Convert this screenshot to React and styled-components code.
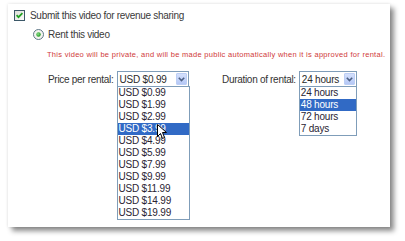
import React from "react";
import styled, { createGlobalStyle } from "styled-components";

const GlobalStyle = createGlobalStyle`
  html, body {
    margin: 0;
    padding: 0;
    background: #ffffff;
  }
  body {
    font-family: "Liberation Sans", Arial, sans-serif;
  }
`;

const Stage = styled.div`
  width: 405px;
  height: 241px;
  padding: 4px 0 0 8px;
  box-sizing: border-box;
  overflow: hidden;
`;

const Panel = styled.div`
  width: 382px;
  height: 223px;
  background: #ffffff;
  box-sizing: border-box;
  padding: 6px 0 0 6px;
  box-shadow: 4px 4px 5px rgba(0, 0, 0, 0.45), 0 0 3px rgba(0, 0, 0, 0.12);
`;

const Row = styled.div`
  display: flex;
  align-items: center;
  height: ${(props) => props.h || 11}px;
  margin-top: ${(props) => props.mt || 0}px;
  margin-left: ${(props) => props.ml || 0}px;
  gap: ${(props) => props.gap || 0}px;
`;

const Text = styled.span`
  font-size: 10px;
  letter-spacing: -0.3px;
  color: #3a3a3a;
  white-space: nowrap;
  line-height: 11px;
`;

const Notice = styled.div`
  margin: 10px 0 0 33px;
  font-size: 7.5px;
  letter-spacing: 0.29px;
  line-height: 10px;
  color: #d03a3a;
  white-space: nowrap;
`;

const Field = styled.div`
  display: flex;
  align-items: center;
  gap: 3px;
  width: ${(props) => (props.w ? `${props.w}px` : "auto")};
`;

const Label = styled.span`
  font-size: 10px;
  letter-spacing: -0.3px;
  color: #333333;
  white-space: nowrap;
`;

const Select = styled.div`
  position: relative;
  width: ${(props) => props.w}px;
  height: 16px;
  box-sizing: border-box;
  border: 1px solid #7f9db9;
  background: #ffffff;
  display: flex;
  align-items: center;
`;

const SelectValue = styled.span`
  flex: 1;
  padding-left: 2px;
  font-size: 10px;
  letter-spacing: -0.2px;
  color: #2a2a2a;
  white-space: nowrap;
`;

const ArrowButton = styled.span`
  width: 11px;
  height: 12px;
  margin-right: 1px;
  box-sizing: border-box;
  border: 1px solid #bccef5;
  border-radius: 1px;
  background: linear-gradient(#d4e0fc, #b5c8f6);
  display: flex;
  align-items: center;
  justify-content: center;
`;

const List = styled.div`
  position: absolute;
  top: 100%;
  left: -1px;
  width: ${(props) => props.w}px;
  box-sizing: border-box;
  border: 1px solid #7f9db9;
  background: #ffffff;
  z-index: 2;
`;

const Option = styled.div`
  height: 12px;
  line-height: 12px;
  padding-left: 1px;
  font-size: 10px;
  letter-spacing: -0.2px;
  white-space: nowrap;
  color: ${(props) => (props.selected ? "#ffffff" : "#2a2433")};
  background: ${(props) => (props.selected ? "#316ac5" : "transparent")};
`;

const Pointer = styled.svg`
  position: absolute;
  left: 39px;
  top: 37px;
`;

const Checkbox = () => (
  <svg width="11" height="11" viewBox="0 0 11 11">
    <defs>
      <linearGradient id="cbg" x1="0" y1="0" x2="1" y2="1">
        <stop offset="0" stopColor="#dcdcd6" />
        <stop offset="1" stopColor="#ffffff" />
      </linearGradient>
    </defs>
    <rect x="0.5" y="0.5" width="10" height="10" fill="url(#cbg)" stroke="#3c5868" />
    <path d="M2.6 5.2 L4.5 7.2 L8.4 3.2" fill="none" stroke="#21a121" strokeWidth="1.7" />
  </svg>
);

const Radio = () => (
  <svg width="11" height="11" viewBox="0 0 11 11">
    <defs>
      <radialGradient id="rdot" cx="0.4" cy="0.4" r="0.6">
        <stop offset="0" stopColor="#8ee08e" />
        <stop offset="1" stopColor="#1f9a1f" />
      </radialGradient>
    </defs>
    <circle cx="5.5" cy="5.5" r="5" fill="#f4f4f0" stroke="#5f7888" />
    <circle cx="5.5" cy="5.5" r="2.2" fill="url(#rdot)" />
  </svg>
);

const Chevron = () => (
  <svg width="7" height="5" viewBox="0 0 7 5">
    <path d="M0.8 0.8 L3.5 3.6 L6.2 0.8" fill="none" stroke="#4d6185" strokeWidth="1.6" />
  </svg>
);

const prices = ["0.99", "1.99", "2.99", "3.99", "4.99", "5.99", "7.99", "9.99", "11.99", "14.99", "19.99"];
const durations = ["24 hours", "48 hours", "72 hours", "7 days"];

const App = () => {
  return (
    <>
      <GlobalStyle />
      <Stage>
        <Panel>
          <Row gap={5}>
            <Checkbox />
            <Text>Submit this video for revenue sharing</Text>
          </Row>
          <Row mt={8} ml={19} gap={4}>
            <Radio />
            <Text>Rent this video</Text>
          </Row>
          <Notice>
            This video will be private, and will be made public automatically when it is approved for rental.
          </Notice>
          <Row h={16} mt={11} ml={34}>
            <Field w={174}>
              <Label>Price per rental:</Label>
              <Select w={72}>
                <SelectValue>USD $0.99</SelectValue>
                <ArrowButton>
                  <Chevron />
                </ArrowButton>
                <List w={73}>
                  {prices.map((p) => (
                    <Option key={p} selected={p === "3.99"}>
                      USD ${p}
                    </Option>
                  ))}
                  <Pointer width="11" height="16" viewBox="0 0 11 16">
                    <path
                      d="M0.5 0.5 L0.5 12.5 L3.5 9.5 L5.5 14.5 L7.5 13.5 L5.5 8.5 L9.5 8.5 Z"
                      fill="#ffffff"
                      stroke="#000000"
                      strokeWidth="1"
                    />
                  </Pointer>
                </List>
              </Select>
            </Field>
            <Field>
              <Label>Duration of rental:</Label>
              <Select w={58}>
                <SelectValue>24 hours</SelectValue>
                <ArrowButton>
                  <Chevron />
                </ArrowButton>
                <List w={58}>
                  {durations.map((d) => (
                    <Option key={d} selected={d === "48 hours"}>
                      {d}
                    </Option>
                  ))}
                </List>
              </Select>
            </Field>
          </Row>
        </Panel>
      </Stage>
    </>
  );
};

export default App;
